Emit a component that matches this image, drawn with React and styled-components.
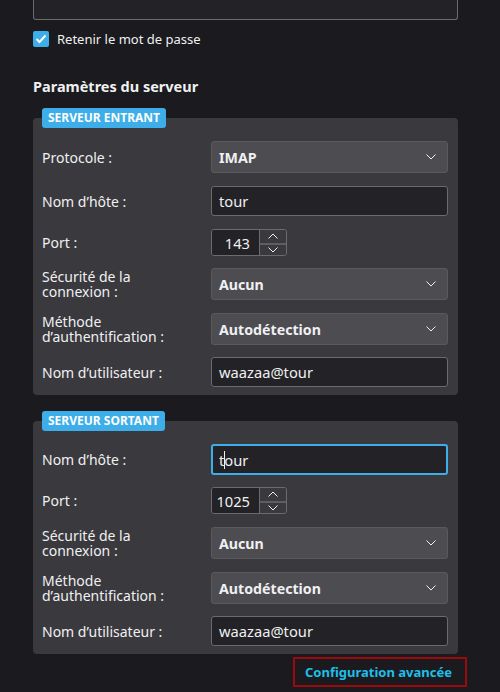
import React from 'react';
import styled, { createGlobalStyle } from 'styled-components';

const GlobalStyle = createGlobalStyle`
  html, body {
    margin: 0;
    padding: 0;
    background: #1b1a1e;
  }
  body {
    font-family: "Noto Sans", "DejaVu Sans", sans-serif;
    font-size: 13px;
    color: #eff0f1;
  }
`;

const Page = styled.div`
  width: 425px;
  margin-left: 33px;
  padding-bottom: 4px;
`;

const PasswordField = styled.div`
  height: 20px;
  box-sizing: border-box;
  border: 1px solid #6b6a6f;
  border-top: none;
  border-radius: 0 0 3px 3px;
  background: #232226;
`;

const CheckRow = styled.label`
  display: flex;
  align-items: center;
  gap: 8px;
  margin-top: 11px;
  height: 16px;
`;

const CheckBox = styled.span`
  width: 16px;
  height: 16px;
  border-radius: 2px;
  background: #3daee9;
  display: flex;
  align-items: center;
  justify-content: center;
`;

const Heading = styled.h2`
  margin: 30px 0 0;
  font-size: 14.5px;
  font-weight: 700;
  line-height: 18px;
`;

const Section = styled.section`
  position: relative;
  margin-top: ${({ $top }) => $top}px;
  background: #3a393e;
  border-radius: 4px;
  padding: 23px 10px 8px 9px;
  display: flex;
  flex-direction: column;
  gap: 13px;
`;

const Badge = styled.span`
  position: absolute;
  top: -10px;
  left: 9px;
  height: 20px;
  padding: 0 6px;
  border-radius: 3px;
  background: #3daee9;
  color: #fcfcfc;
  font-size: 12px;
  font-weight: 700;
  line-height: 20px;
`;

const Row = styled.div`
  display: grid;
  grid-template-columns: 169px 1fr;
  align-items: center;
  margin-top: ${({ $shift = 0 }) => $shift}px;
`;

const Label = styled.span`
  font-size: 14px;
  line-height: 15px;
`;

const Combo = styled.div`
  height: 32px;
  box-sizing: border-box;
  border: 1px solid #5a595e;
  border-radius: 3px;
  background: #4d4c51;
  display: flex;
  align-items: center;
  justify-content: space-between;
  padding: 0 11px 0 7px;
  font-weight: 700;
  font-size: 14.2px;
`;

const TextField = styled.div`
  height: ${({ $focus }) => ($focus ? 31 : 30)}px;
  box-sizing: border-box;
  border: ${({ $focus }) => ($focus ? '2px solid #3daee9' : '1px solid #6b6a6f')};
  border-radius: 3px;
  background: #232226;
  display: flex;
  align-items: center;
  padding-left: ${({ $focus }) => ($focus ? 6 : 7)}px;
  font-size: 14.7px;
`;

const Caret = styled.span`
  display: inline-block;
  width: 1px;
  height: 18px;
  background: #eff0f1;
  margin-right: -1px;
`;

const Spin = styled.div`
  width: 76px;
  height: 27px;
  box-sizing: border-box;
  border: 1px solid #6b6a6f;
  border-radius: 3px;
  display: grid;
  grid-template-columns: 1fr 27px;
  overflow: hidden;
`;

const SpinValue = styled.span`
  background: #232226;
  display: flex;
  align-items: center;
  justify-content: flex-end;
  padding-right: 9px;
  font-size: 14.7px;
`;

const SpinButtons = styled.div`
  display: grid;
  grid-template-rows: 1fr 1fr;
  border-left: 1px solid #6b6a6f;
  background: #3a393e;
`;

const SpinButton = styled.span`
  display: flex;
  align-items: center;
  justify-content: center;
  border-top: ${({ $lower }) => ($lower ? '2px solid #5e5d62' : 'none')};
`;

const Footer = styled.div`
  display: flex;
  justify-content: flex-end;
  margin-top: 3px;
  margin-right: -9px;
`;

const AdvancedLink = styled.a`
  display: flex;
  align-items: center;
  width: 174px;
  height: 30px;
  box-sizing: border-box;
  border: 2px solid #9c0a0e;
  padding-left: 10px;
  color: #1ebfe8;
  font-weight: 700;
  font-size: 13px;
  text-decoration: none;
`;

const Chevron = ({ up, size = 10 }) => (
  <svg width={size} height={size / 2 + 1} viewBox="0 0 10 6">
    <polyline
      points={up ? '0.5,5.5 5,1 9.5,5.5' : '0.5,0.5 5,5 9.5,0.5'}
      fill="none"
      stroke="#eff0f1"
      strokeWidth="1"
    />
  </svg>
);

const Check = () => (
  <svg width="12" height="10" viewBox="0 0 12 10">
    <polyline points="1.5,5 4.5,8 10.5,1.5" fill="none" stroke="#fff" strokeWidth="2" />
  </svg>
);

const ComboBox = ({ value }) => (
  <Combo>
    {value}
    <Chevron />
  </Combo>
);

const SpinBox = ({ value }) => (
  <Spin>
    <SpinValue>{value}</SpinValue>
    <SpinButtons>
      <SpinButton>
        <Chevron up />
      </SpinButton>
      <SpinButton $lower>
        <Chevron />
      </SpinButton>
    </SpinButtons>
  </Spin>
);

// shifts: per-row tweaks to the 13px gap, measured from the reference
const ServerSection = ({ title, top, protocol, host, port, focusHost, shifts }) => (
  <Section $top={top}>
    <Badge>{title}</Badge>
    {protocol && (
      <Row>
        <Label>Protocole :</Label>
        <ComboBox value={protocol} />
      </Row>
    )}
    <Row>
      <Label>Nom d’hôte :</Label>
      {focusHost ? (
        <TextField $focus>
          t<Caret />our
        </TextField>
      ) : (
        <TextField>{host}</TextField>
      )}
    </Row>
    <Row $shift={shifts[0]}>
      <Label>Port :</Label>
      <SpinBox value={port} />
    </Row>
    <Row $shift={shifts[1]}>
      <Label>
        Sécurité de la
        <br />
        connexion :
      </Label>
      <ComboBox value="Aucun" />
    </Row>
    <Row>
      <Label>
        Méthode
        <br />
        d’authentification :
      </Label>
      <ComboBox value="Autodétection" />
    </Row>
    <Row $shift={-1}>
      <Label>Nom d’utilisateur :</Label>
      <TextField>waazaa@tour</TextField>
    </Row>
  </Section>
);

export default function App() {
  return (
    <>
      <GlobalStyle />
      <Page>
        <PasswordField />
        <CheckRow>
          <CheckBox>
            <Check />
          </CheckBox>
          Retenir le mot de passe
        </CheckRow>
        <Heading>Paramètres du serveur</Heading>
        <ServerSection
          title="SERVEUR ENTRANT"
          top={23}
          protocol="IMAP"
          host="tour"
          port="143"
          shifts={[0, -1]}
        />
        <ServerSection
          title="SERVEUR SORTANT"
          top={26}
          host="tour"
          port="1025"
          focusHost
          shifts={[-1, 0]}
        />
        <Footer>
          <AdvancedLink href="#">Configuration avancée</AdvancedLink>
        </Footer>
      </Page>
    </>
  );
}
